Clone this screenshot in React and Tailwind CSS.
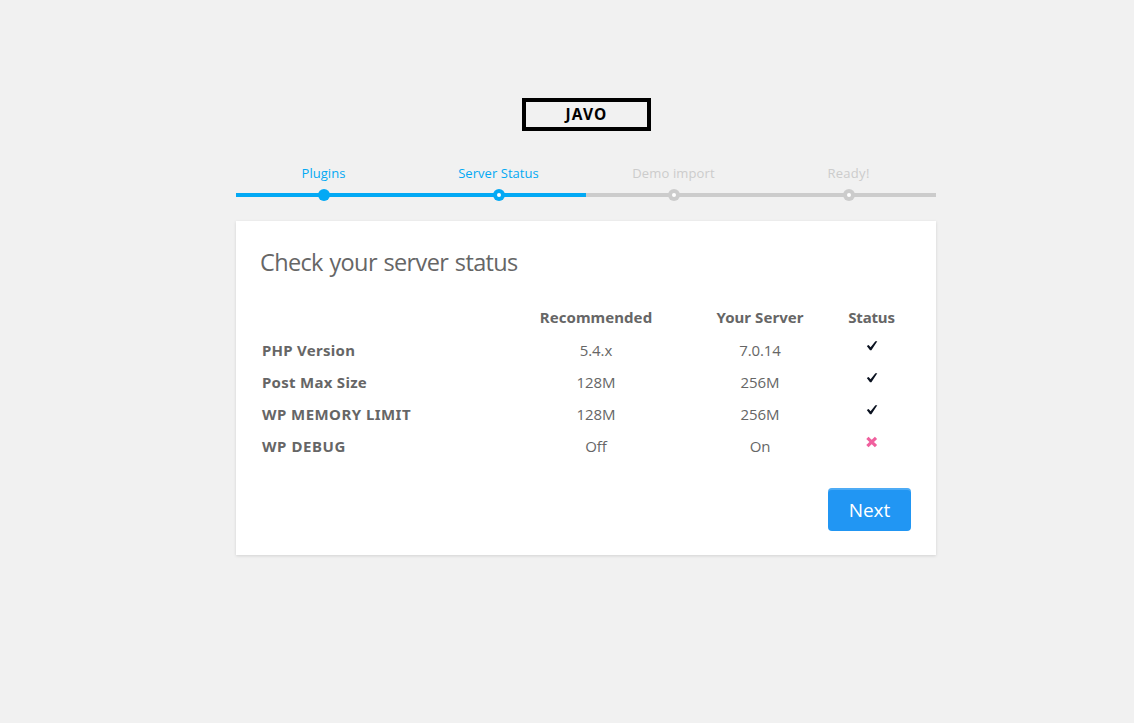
const steps = [
  { label: "Plugins", done: true, active: true, tracking: "tracking-[0.05px]" },
  { label: "Server Status", done: false, active: true, tracking: "tracking-[0.05px]" },
  { label: "Demo import", done: false, active: false, tracking: "tracking-[0.15px]" },
  { label: "Ready!", done: false, active: false, tracking: "tracking-[0.3px]" },
];

const rows = [
  { name: "PHP Version", recommended: "5.4.x", server: "7.0.14", ok: true, tracking: "tracking-[0.27px]" },
  { name: "Post Max Size", recommended: "128M", server: "256M", ok: true, tracking: "tracking-[0.28px]" },
  { name: "WP MEMORY LIMIT", recommended: "128M", server: "256M", ok: true, tracking: "tracking-[0.45px]" },
  { name: "WP DEBUG", recommended: "Off", server: "On", ok: false, tracking: "tracking-[0.58px]" },
];

function Check() {
  return (
    <svg width="12" height="12" viewBox="0 0 12 12" className="ml-px">
      <path d="M0.8 6 L2.6 5 L4.6 7.2 L9.4 1.2 L11.3 1.2 L5.4 10.2 L4 10.2 Z" fill="#0b1220" />
    </svg>
  );
}

function Cross() {
  return (
    <svg width="12" height="12" viewBox="0 0 12 12">
      <path d="M1.4 1.8 L10 10.2 M10 1.8 L1.4 10.2" stroke="#f0609e" strokeWidth="3.2" fill="none" />
    </svg>
  );
}

function Step({ step }) {
  return (
    <li className={`flex h-[37px] w-[175px] flex-col items-center ${step.active ? "text-[#03a9f4]" : "text-[#cccccc]"}`}>
      <span className={`h-[25px] shrink-0 text-[13px] leading-[18px] whitespace-nowrap ${step.tracking}`}>{step.label}</span>
      <span className="flex h-3 w-full items-center">
        <span className="h-1 flex-1 bg-current" />
        <span className="-mx-px flex size-3 items-center justify-center rounded-full bg-current">
          {!step.done && <span className="size-1 rounded-full bg-white" />}
        </span>
        <span className="h-1 flex-1 bg-current" />
      </span>
    </li>
  );
}

export default function App() {
  return (
    <div className="flex h-screen w-full flex-col items-center overflow-hidden bg-[#f1f1f1] pl-[38px] pt-[98px] font-['Open_Sans','Noto_Sans',sans-serif] text-[#666666]">
      <h1 className="ml-px flex h-[33px] w-[129px] items-center justify-center border-4 border-black text-[15.5px] leading-none font-bold tracking-[1.1px] text-black font-['Noto_Sans',sans-serif]">
        JAVO
      </h1>
      <ol className="mt-[33px] flex w-[700px]">
        {steps.map((s) => (
          <Step key={s.label} step={s} />
        ))}
      </ol>
      <main className="mt-5 h-[334px] w-[700px] bg-white px-6 pt-6 shadow-[0_1px_3px_rgba(0,0,0,0.13)]">
        <h2 className="-mt-px text-[23.5px] leading-9 font-normal tracking-[-0.64px] [word-spacing:1.2px]">Check your server status</h2>
        <div className="mt-[21px] ml-0.5 text-[15px]">
          <div className="grid h-[33px] grid-cols-[252px_164px_164px_59px] items-center text-center font-bold tracking-[0.05px] font-['Noto_Sans',sans-serif]">
            <span />
            <span>Recommended</span>
            <span>Your Server</span>
            <span className="tracking-[-0.15px]">Status</span>
          </div>
          {rows.map((r) => (
            <div key={r.name} className="grid h-8 grid-cols-[252px_164px_164px_59px] items-center text-center">
              <span className={`text-left font-bold font-['Noto_Sans',sans-serif] ${r.tracking}`}>{r.name}</span>
              <span className="tracking-[-0.1px]">{r.recommended}</span>
              <span className="tracking-[-0.1px]">{r.server}</span>
              <span className="flex justify-center pb-[9px]">{r.ok ? <Check /> : <Cross />}</span>
            </div>
          ))}
        </div>
        <div className="mt-[26px] flex justify-end pr-px">
          <button className="h-[43px] w-[83px] rounded-[4px] bg-[#2196f3] pt-px text-[19px] text-white shadow-[inset_0_2px_0_rgba(255,255,255,0.2)]">
            Next
          </button>
        </div>
      </main>
    </div>
  );
}
